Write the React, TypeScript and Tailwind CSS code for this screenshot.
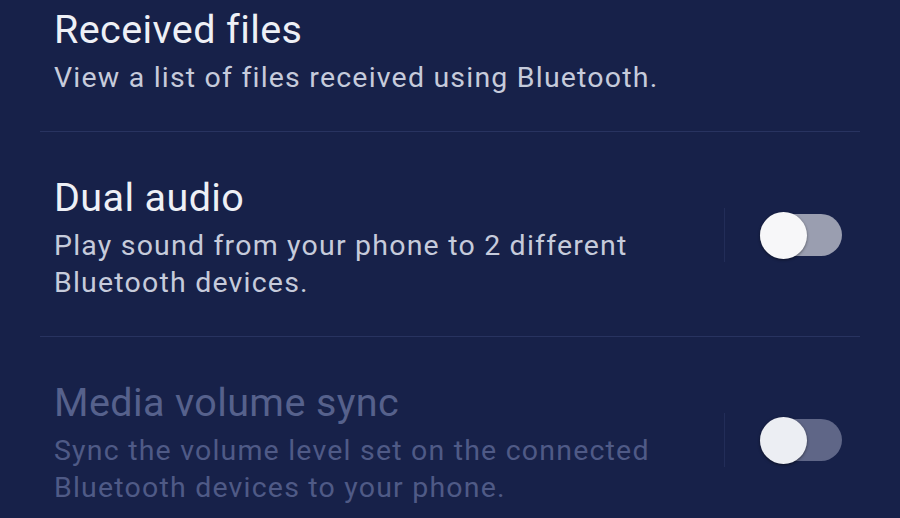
import type { ReactNode } from "react";

interface SettingRowProps {
  title: string;
  description: string;
  disabled?: boolean;
  toggle?: boolean;
  children?: ReactNode;
}

const Toggle = ({ disabled }: { disabled?: boolean }) => {
  return (
    <div className="flex items-center gap-[35px] mt-[32px]">
      <div className="w-px h-[54px] bg-[#222d58]" />
      <div className="relative w-[82px] h-[47px] flex items-center">
        <div
          className={
            disabled
              ? "w-full h-[42px] rounded-full bg-[#5f6687]"
              : "w-full h-[42px] rounded-full bg-[#9a9eb0]"
          }
        />
        <div
          className={
            disabled
              ? "absolute left-0 top-0 size-[47px] rounded-full bg-[#eceef3] shadow-[0_1px_3px_rgba(0,0,0,0.5)]"
              : "absolute left-0 top-0 size-[47px] rounded-full bg-[#f7f7f9] shadow-[0_1px_3px_rgba(0,0,0,0.45)]"
          }
        />
      </div>
    </div>
  );
};

const SettingRow = ({ title, description, disabled, toggle }: SettingRowProps) => {
  return (
    <div className="flex items-start pl-[14px] pr-[18px]">
      <div className="flex-1 flex flex-col gap-[7px] pr-[30px]">
        <p
          className={
            disabled
              ? "text-[39.5px] leading-[44px] tracking-[0.4px] text-[#56618c]"
              : "text-[39.5px] leading-[44px] tracking-[0.4px] text-[#eef0f6]"
          }
        >
          {title}
        </p>
        <p
          className={
            disabled
              ? "text-[28.5px] leading-[37px] tracking-[1.2px] text-[#4f5a86]"
              : "text-[28.5px] leading-[37px] tracking-[1.2px] text-[#c6cbdb]"
          }
        >
          {description}
        </p>
      </div>
      {toggle ? <Toggle disabled={disabled} /> : null}
    </div>
  );
};

export default function App() {
  return (
    <div className="w-[900px] h-[518px] overflow-hidden bg-[#172149] font-['Roboto',sans-serif]">
      <div className="mx-[40px] pt-[8px] flex flex-col">
        <div className="pb-[35px] border-b border-[#283360]">
          <SettingRow
            title="Received files"
            description="View a list of files received using Bluetooth."
          />
        </div>
        <div className="pt-[44px] pb-[35px] border-b border-[#283360]">
          <SettingRow
            title="Dual audio"
            description="Play sound from your phone to 2 different Bluetooth devices."
            toggle
          />
        </div>
        <div className="pt-[44px]">
          <SettingRow
            title="Media volume sync"
            description="Sync the volume level set on the connected Bluetooth devices to your phone."
            disabled
            toggle
          />
        </div>
      </div>
    </div>
  );
}
